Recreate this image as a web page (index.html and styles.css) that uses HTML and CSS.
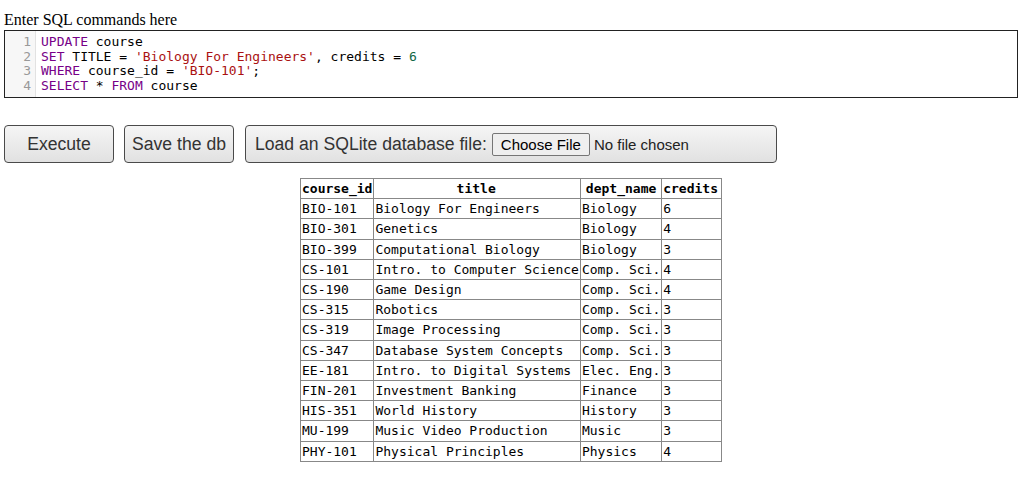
FILE: index.html
```html
<!DOCTYPE html>
<html>
<head>
<meta charset="utf-8">
<title>SQL</title>
<link rel="stylesheet" href="styles.css">
</head>
<body>
<div class="label">Enter SQL commands here</div>
<div class="editor">
  <div class="gutter">
    <div class="ln">1</div>
    <div class="ln">2</div>
    <div class="ln">3</div>
    <div class="ln">4</div>
  </div>
  <div class="code">
    <div class="line"><span class="kw">UPDATE</span> course</div>
    <div class="line"><span class="kw">SET</span> TITLE = <span class="str">'Biology For Engineers'</span>, credits = <span class="num">6</span></div>
    <div class="line"><span class="kw">WHERE</span> course_id = <span class="str">'BIO-101'</span>;</div>
    <div class="line"><span class="kw">SELECT</span> * <span class="kw">FROM</span> course</div>
  </div>
</div>
<div class="actions">
  <button class="btn btn-fixed">Execute</button>
  <button class="btn btn-fixed">Save the db</button>
  <label class="btn btn-load">Load an SQLite database file:<span class="file-btn">Choose File</span><span class="file-name">No file chosen</span></label>
</div>
<table class="results">
  <thead>
    <tr><th>course_id</th><th class="wide">title</th><th>dept_name</th><th class="wide">credits</th></tr>
  </thead>
  <tbody>
    <tr><td>BIO-101</td><td>Biology For Engineers</td><td>Biology</td><td>6</td></tr>
    <tr><td>BIO-301</td><td>Genetics</td><td>Biology</td><td>4</td></tr>
    <tr><td>BIO-399</td><td>Computational Biology</td><td>Biology</td><td>3</td></tr>
    <tr><td>CS-101</td><td>Intro. to Computer Science</td><td>Comp. Sci.</td><td>4</td></tr>
    <tr><td>CS-190</td><td>Game Design</td><td>Comp. Sci.</td><td>4</td></tr>
    <tr><td>CS-315</td><td>Robotics</td><td>Comp. Sci.</td><td>3</td></tr>
    <tr><td>CS-319</td><td>Image Processing</td><td>Comp. Sci.</td><td>3</td></tr>
    <tr><td>CS-347</td><td>Database System Concepts</td><td>Comp. Sci.</td><td>3</td></tr>
    <tr><td>EE-181</td><td>Intro. to Digital Systems</td><td>Elec. Eng.</td><td>3</td></tr>
    <tr><td>FIN-201</td><td>Investment Banking</td><td>Finance</td><td>3</td></tr>
    <tr><td>HIS-351</td><td>World History</td><td>History</td><td>3</td></tr>
    <tr><td>MU-199</td><td>Music Video Production</td><td>Music</td><td>3</td></tr>
    <tr><td>PHY-101</td><td>Physical Principles</td><td>Physics</td><td>4</td></tr>
  </tbody>
</table>
</body>
</html>
```

FILE: styles.css
```css
html, body {
  margin: 0;
  background: #fff;
}
body {
  padding: 11px 7px 0 4px;
  font-family: "Liberation Serif", "Times New Roman", serif;
  font-size: 16px;
  color: #000;
}
.label {
  height: 18px;
  line-height: 18px;
  margin-bottom: 1px;
}
.editor {
  display: flex;
  border: 1px solid #222;
  height: 68px;
  box-sizing: border-box;
  font-family: "DejaVu Sans Mono", monospace;
  font-size: 13px;
  line-height: 14.5px;
}
.gutter {
  width: 31px;
  background: #f7f7f7;
  border-right: 1px solid #e2e2e2;
  padding-top: 4px;
  box-sizing: border-box;
  color: #999;
  text-align: right;
}
.ln {
  padding-right: 4px;
}
.code {
  padding: 4px 0 0 5px;
  color: #000;
}
.line {
  white-space: pre;
}
.kw { color: #708; }
.str { color: #a11; }
.num { color: #164; }

.actions {
  display: flex;
  align-items: center;
  margin-top: 27px;
  gap: 10px;
}
.btn {
  height: 38px;
  box-sizing: border-box;
  border: 1px solid #4a4a4a;
  border-radius: 4px;
  background: linear-gradient(#f5f5f5, #e1e1e1);
  color: #333;
  font-family: "Liberation Sans", Arial, sans-serif;
  font-size: 17.6px;
  padding: 0;
  margin: 0;
  display: flex;
  align-items: center;
  justify-content: center;
}
.btn-fixed {
  width: 110px;
}
.btn-load {
  width: 532px;
  justify-content: flex-start;
  padding-left: 9px;
  margin-left: 1px;
}
.file-btn {
  margin-left: 5px;
  height: 23px;
  box-sizing: border-box;
  padding: 0 8px;
  border: 1px solid #767676;
  border-radius: 2px;
  background: #efefef;
  color: #000;
  font-size: 15px;
  line-height: 21px;
}
.file-name {
  margin-left: 4px;
  font-size: 15px;
  color: #222;
}

.results {
  margin: 15px auto 0;
  border-collapse: collapse;
  border: 1px solid #888;
  font-family: "DejaVu Sans Mono", monospace;
  font-size: 13px;
  line-height: 15.2px;
  color: #000;
}
.results th,
.results td {
  border: 1px solid #888;
  padding: 2px 1px;
  white-space: pre;
}
.results th {
  font-weight: bold;
  text-align: center;
}
.results th.wide {
  padding-right: 3px;
}
.results td {
  text-align: left;
}
```
